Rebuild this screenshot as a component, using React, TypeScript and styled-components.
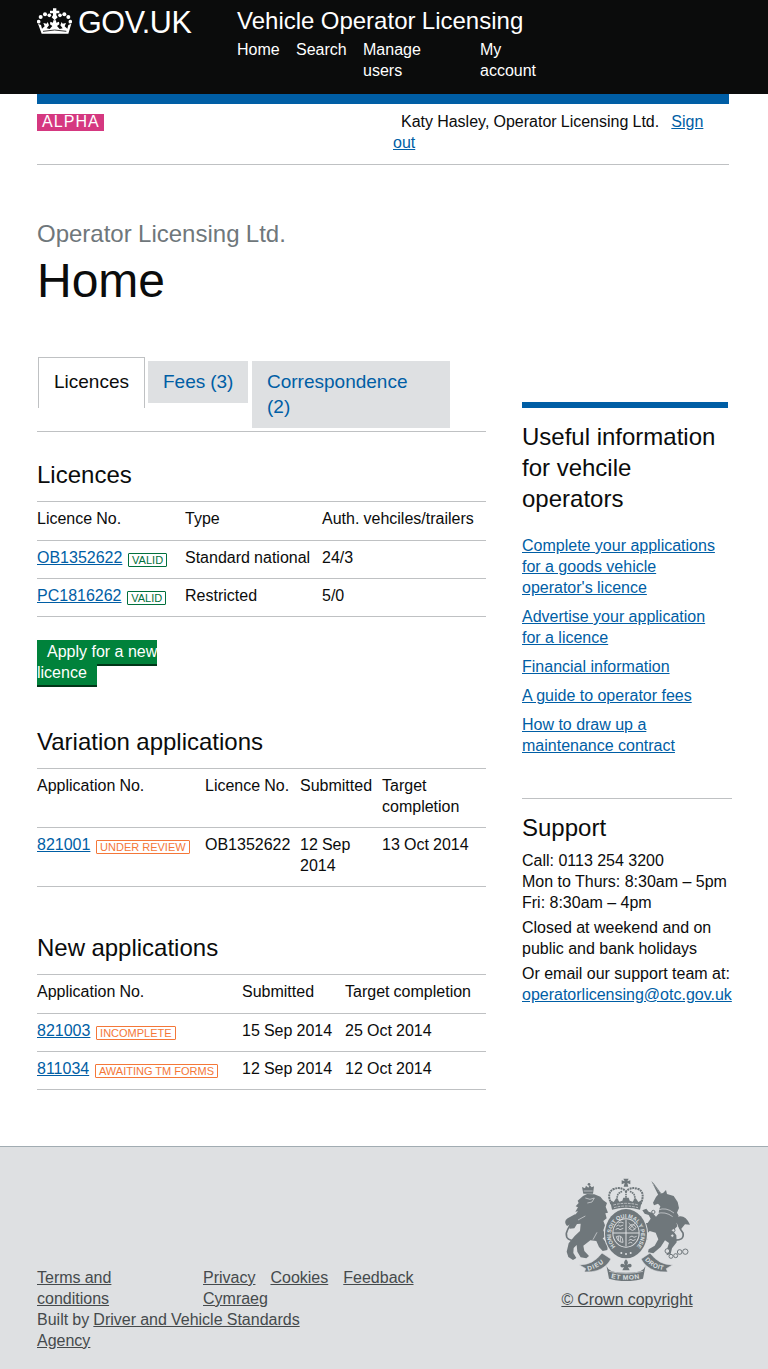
import React from "react";
import styled, { createGlobalStyle } from "styled-components";

const GlobalStyle = createGlobalStyle`
  * { box-sizing: border-box; }
  body {
    margin: 0;
    background: #fff;
    color: #0b0c0c;
    font-family: "Liberation Sans", Arial, sans-serif;
    font-size: 16px;
    line-height: 21px;
    word-spacing: -0.3px;
  }
  h1, h2, p, ul { margin: 0; padding: 0; font-weight: 400; }
  ul { list-style: none; }
`;

const Page = styled.div`
  width: 768px;
  height: 1369px;
  display: flex;
  flex-direction: column;
  overflow: hidden;
`;

const Header = styled.header`
  flex: none;
  height: 94px;
  padding: 0 39px 0 37px;
  display: flex;
  background: #0b0c0c;
  color: #fff;
`;

const Brand = styled.a`
  width: 200px;
  height: 40px;
  padding-top: 7px;
  display: flex;
  gap: 6px;
`;

const BrandName = styled.span`
  font-size: 30.5px;
  line-height: 31px;
  letter-spacing: -0.4px;
`;

const ServiceName = styled.div`
  padding-top: 6px;
  font-size: 24px;
  line-height: 30px;
`;

const Nav = styled.ul`
  padding-top: 3px;
  display: flex;
  gap: 16px;
`;

const NavItem = styled.li<{ $width?: number }>`
  width: ${(p) => (p.$width ? `${p.$width}px` : "auto")};
`;

const Strip = styled.div`
  flex: none;
  height: 71px;
  margin: 0 39px 0 37px;
  padding-top: 7px;
  border-top: 10px solid #005ea5;
  border-bottom: 1px solid #bfc1c3;
  display: flex;
  justify-content: space-between;
`;

const Phase = styled.strong`
  height: 17px;
  width: 67px;
  margin-top: 3px;
  padding-left: 5px;
  background: #d53880;
  color: #fff;
  font-weight: 400;
  line-height: 16px;
  letter-spacing: 1.05px;
  white-space: nowrap;
`;

const Account = styled.div`
  width: 336px;
  text-indent: 8px;
`;

const Link = styled.a`
  color: #005ea5;
  text-decoration: underline;
`;

const SignOut = styled(Link)`
  margin-left: 8px;
`;

const Title = styled.div`
  flex: none;
  padding: 54px 0 0 37px;
  height: 192px;
`;

const Organisation = styled.p`
  font-size: 24px;
  line-height: 30px;
  color: #6f777b;
`;

const PageHeading = styled.h1`
  font-size: 48px;
  line-height: 50px;
  margin-top: 7px;
`;

const Columns = styled.main`
  flex: none;
  height: 789px;
  padding-left: 37px;
  display: flex;
  gap: 36px;
`;

const MainColumn = styled.div`
  width: 449px;
`;

const Tabs = styled.div`
  height: 75px;
  padding-left: 1px;
  border-bottom: 1px solid #bfc1c3;
  display: flex;
  align-items: flex-start;
  font-size: 19px;
  line-height: 25px;
`;

const Tab = styled.a<{ $width: number; $gap: number }>`
  width: ${(p) => p.$width}px;
  margin: 4px 0 0 ${(p) => p.$gap}px;
  padding: 8px 14px 9px 15px;
  background: #dee0e2;
  color: #005ea5;
`;

const ActiveTab = styled.a`
  width: 107px;
  height: 51px;
  padding: 11px 15px;
  border: 1px solid #bfc1c3;
  border-bottom: 0;
`;

const SectionHeading = styled.h2<{ $space: number }>`
  margin-top: ${(p) => p.$space}px;
  font-size: 24px;
  line-height: 30px;
`;

const Table = styled.table`
  width: 449px;
  margin-top: 11px;
  table-layout: fixed;
  border-collapse: separate;
  border-spacing: 0;
  border-top: 1px solid #bfc1c3;
  text-align: left;
`;

const HeadCell = styled.th<{ $width: number; $compact?: boolean }>`
  width: ${(p) => p.$width}px;
  padding: 6px 0 ${(p) => (p.$compact ? 10 : 11)}px;
  border-bottom: 1px solid #bfc1c3;
  font-weight: 400;
  vertical-align: top;
`;

const Cell = styled.td`
  height: 38px;
  padding: 6px 0 10px;
  border-bottom: 1px solid #bfc1c3;
  vertical-align: top;
  white-space: pre-line;
`;

const Badge = styled.span<{ $color: string }>`
  display: inline-block;
  height: 14px;
  margin-left: 5.7px;
  padding: 0 3px;
  border: 1px solid ${(p) => p.$color};
  border-radius: 1px;
  color: ${(p) => p.$color};
  font-size: 11px;
  line-height: 12px;
  word-spacing: 0;
  vertical-align: -1px;
`;

const Action = styled.div`
  width: 122px;
  margin-top: 24px;
  word-spacing: 0;
`;

const Button = styled.a`
  padding: 3px 10px 4px;
  background: #00823b;
  color: #fff;
  box-shadow: 0 2px 0 #003618;
`;

const Sidebar = styled.aside`
  width: 210px;
  padding-top: 45px;
  word-spacing: -0.05px;
`;

const Related = styled.section`
  width: 206px;
  height: 396px;
  padding-top: 13px;
  border-top: 6px solid #005ea5;
`;

const SideHeading = styled.h2`
  font-size: 24px;
  line-height: 31px;
`;

const LinkList = styled.ul`
  width: 200px;
  margin-top: 21px;
  display: flex;
  flex-direction: column;
  gap: 8px;
`;

const Support = styled.section`
  padding-top: 13px;
  border-top: 1px solid #bfc1c3;
  white-space: nowrap;
`;

const Para = styled.p`
  margin-top: 4px;

  ${SideHeading} + & { margin-top: 7px; }
`;

const Footer = styled.footer`
  flex: 1;
  padding-left: 37px;
  border-top: 1px solid #a1acb2;
  background: #dee0e2;
  color: #454a4c;
  display: flex;
`;

const FooterMeta = styled.div`
  width: 524px;
  padding-top: 120px;
`;

const FooterNav = styled.div`
  display: flex;
`;

const Terms = styled.div`
  flex: none;
  width: 166px;
`;

const FooterLinks = styled.ul`
  width: 230px;
  display: flex;
  flex-wrap: wrap;
  column-gap: 15px;
`;

const FooterLink = styled.a`
  text-decoration: underline;
`;

const Crest = styled.a`
  width: 132px;
  padding-top: 31px;
  display: flex;
  flex-direction: column;
  align-items: center;
  white-space: nowrap;
`;

const CrestCaption = styled.span`
  margin-top: 8px;
  text-decoration: underline;
`;

function CrownIcon() {
  return (
    <svg width="35" height="27" viewBox="0 0 105 81" fill="#fff">
      <path d="M48 4h10v7h9v8h-9v6l4 6-9 9-9-9 4-6v-6h-9v-8h9z" />
      <circle cx="5" cy="44" r="5.5" />
      <circle cx="11" cy="30" r="6" />
      <circle cx="24" cy="22" r="6" />
      <circle cx="37" cy="25" r="5.5" />
      <circle cx="69" cy="25" r="5.5" />
      <circle cx="82" cy="22" r="6" />
      <circle cx="94" cy="30" r="6" />
      <circle cx="100" cy="44" r="5.5" />
      <path d="M3 50l9 4 3 11 8-7-4-10 10 2 3-5 4 10-7 9 9 2 8-9-7-5 1-8 8 3 1-7h8l1 7 8-3 1 8-7 5 8 9 9-2-7-9 4-10 3 5 10-2-4 10 8 7 3-11 9-4-9 30H14z" />
      <path d="M18 73q35-8 70 0" fill="none" stroke="#0b0c0c" strokeWidth="2.5" />
    </svg>
  );
}

function RoyalArms() {
  const ink = "#6f777b";
  const paper = "#dee0e2";
  return (
    <svg width="125" height="103" viewBox="30 25 375 309" fill={ink}>
      <defs>
        <path id="garter" d="M182 231A45 50 0 1 1 244 231" />
        <path id="mottoLeft" d="M99 303Q132 296 158 268" />
        <path id="mottoMid" d="M168 325Q213 335 258 325" />
        <path id="mottoRight" d="M269 271Q294 298 328 302" />
      </defs>

      {/* lion */}
      <path d="M81 52l9 4 3-8 7 6 4-8 6 7 7-3-3 22H85z" />
      <circle cx="102" cy="44" r="4" />
      <path d="M86 64h27" stroke={paper} strokeWidth="2" />
      <path d="M84 79l12-6 22 1 18 7 8 10 12 9-4 11 7 18-8 2 4 15-10 8 5 13-5 15 7 18-9 6 16 20-2 15-14 3-11-12-8-18-18-2-21 16 3 16 14 15-8 7-17-3-10-17-2-20-9 9-1 15 9 15-10 6-14-9-5-16 6-25 18-22 16-15 2-22-11 1-8 13-14 1-3-9 13-17 17-4-9-13 7-9-8 1 8-13-7-3 9-10-3-7z" />
      <path d="M64 213q-32 2-30-22 6-22 22-35" fill="none" stroke={ink} strokeWidth="5" />
      <path d="M36 169q-12-14 2-23l22-12 21 1q4 12-6 20l-21 5z" />
      <path d="M91 85l14 4 13-4-7 12-14 3M91 139l-22 12M126 188l-12 22" fill="none" stroke={paper} strokeWidth="2" />

      {/* central crown */}
      <path d="M205 27h16l-4 8 9-3v12l-9-4 3 11h-14l3-11-9 4V32l9 3z" />
      <path d="M169 103q-16-34 7-45 22-8 37 7 15-15 37-7 22 11 7 45" fill="none" stroke={ink} strokeWidth="6" strokeDasharray="6 2" />
      <path d="M213 65v32M190 98q-11-26 13-33M236 98q11-26-13-33" fill="none" stroke={ink} strokeWidth="5" strokeDasharray="5 2" />
      <path d="M165 91l11 6 8-12 9 11 9-3 3-9h16l3 9 9 3 9-11 8 12 11-6-6 29q-42-12-84 0z" />
      <path d="M175 106q38-10 76 0M177 114q36-10 72 0" fill="none" stroke={paper} strokeWidth="2" strokeDasharray="8 3" />

      {/* unicorn */}
      <path d="M289 34l8 8 23 31-9 5z" />
      <path d="M294 43l25 31" stroke={paper} strokeWidth="1.5" strokeDasharray="3 4" />
      <path d="M294 99l9-17 8-9 13-3 9-9 3 12 20 6 12 18 4 18-6 14 5 9-8 16 4 16-13 13 10 14 1 21-14 18-4 17-12 4 1-19 6-18-12-8-13 20-22 19-16-3 2-9 18-11 11-19-8-20-18-5-10 10 3 16-11 8-9-8 9-8-4-20-16-8-7-11 10-7 13 4 16 0 9-13-6-11-12-4-7-10 12-5 7 9 12 4 10 11 8-9 1-10 4-12-7-8-12 5z" />
      <path d="M309 121q24-10 48 9M305 132q26-8 48 9" fill="none" stroke={paper} strokeWidth="2" />
      <path d="M353 211q36 4 31-21-16-21-15-34" fill="none" stroke={ink} strokeWidth="5" />
      <path d="M368 164q-14-10-6-21l13-3q18-1 30 25l-15-1-14 17z" />
      <g fill={paper} stroke={ink} strokeWidth="3">
        <circle cx="295" cy="127" r="5" />
        <circle cx="355" cy="182" r="5" />
        <circle cx="352" cy="198" r="5" />
        <circle cx="337" cy="244" r="7" />
        <circle cx="348" cy="260" r="6" />
        <circle cx="362" cy="258" r="6" />
        <circle cx="374" cy="247" r="7" />
        <circle cx="391" cy="246" r="8" />
      </g>

      {/* shield and garter */}
      <ellipse cx="213" cy="192" rx="66" ry="76" fill={paper} />
      <ellipse cx="213" cy="192" rx="63" ry="74" />
      <ellipse cx="213" cy="190" rx="41" ry="44" fill={paper} />
      <ellipse cx="213" cy="190" rx="38" ry="41" />
      <path d="M213 150v80M174 190h78" stroke={paper} strokeWidth="3" />
      <g fill="none" stroke={paper} strokeWidth="2.5">
        <path d="M184 170l6-4 5 4 10-4M182 179l7-3 6 4 10-4M190 160l8-3 8 3" />
        <path d="M223 203l8-4 6 4 8-3M221 212l7-3 6 4 8-4M220 221l7-3 5 2" />
        <path d="M221 160l20 20M241 160l-20 20M221 173q12-18 22 0-10 18-22 0" />
        <path d="M184 201q19-9 20 17-16 0-20-17M190 200v14M196 201v15" />
      </g>
      <text fill={paper} fontSize="17" fontWeight="700" fontFamily="Liberation Sans, sans-serif">
        <textPath href="#garter" textLength="228" lengthAdjust="spacingAndGlyphs">HONI SOIT QUI MAL Y PENSE</textPath>
      </text>
      <circle cx="199" cy="250" r="3" fill={paper} />
      <circle cx="213" cy="253" r="3" fill={paper} />
      <circle cx="227" cy="250" r="3" fill={paper} />

      {/* motto ribbon */}
      <path d="M72 285Q112 288 141 250L168 268Q154 294 126 303 110 308 88 307L92 297z" stroke={paper} strokeWidth="2" />
      <path d="M354 285Q314 288 285 250L258 268Q272 294 300 303 316 308 338 307L334 297z" stroke={paper} strokeWidth="2" />
      <path d="M152 276Q153 302 180 307 213 312 246 307 273 302 274 276L264 327Q213 342 162 327z" />
      <path d="M162 305Q213 317 264 305" fill="none" stroke={paper} strokeWidth="2" />
      <path d="M213 269q10 9 3 17 13-9 14 2-1 8-11 4l5 10h-22l5-10q-10 4-11-4 1-11 14-2-7-8 3-17z" />
      <g fill={paper} fontWeight="700" fontFamily="Liberation Sans, sans-serif">
        <text fontSize="19"><textPath href="#mottoLeft" textLength="54" lengthAdjust="spacing">DIEU</textPath></text>
        <text fontSize="20"><textPath href="#mottoMid" textLength="86" lengthAdjust="spacing">ET MON</textPath></text>
        <text fontSize="19"><textPath href="#mottoRight" textLength="64" lengthAdjust="spacing">DROIT</textPath></text>
      </g>
    </svg>
  );
}

const GREEN = "#00703c";
const ORANGE = "#f47738";

type Ref = { id: string; status?: string; color?: string };

function Reference({ id, status, color = ORANGE }: Ref) {
  return (
    <>
      <Link>{id}</Link>
      {status && <Badge $color={color}>{status}</Badge>}
    </>
  );
}

type TableData = { columns: [string, number][]; rows: [Ref, ...string[]][]; compact?: boolean };

function DataTable({ columns, rows, compact }: TableData) {
  return (
    <Table>
      <thead>
        <tr>
          {columns.map(([label, width]) => (
            <HeadCell key={label} $width={width} $compact={compact}>{label}</HeadCell>
          ))}
        </tr>
      </thead>
      <tbody>
        {rows.map(([ref, ...values]) => (
          <tr key={ref.id}>
            <Cell><Reference {...ref} /></Cell>
            {values.map((value) => <Cell key={value}>{value}</Cell>)}
          </tr>
        ))}
      </tbody>
    </Table>
  );
}

const licences: TableData = {
  columns: [["Licence No.", 148], ["Type", 137], ["Auth. vehciles/trailers", 164]],
  rows: [
    [{ id: "OB1352622", status: "VALID", color: GREEN }, "Standard national", "24/3"],
    [{ id: "PC1816262", status: "VALID", color: GREEN }, "Restricted", "5/0"],
  ],
};

const variations: TableData = {
  compact: true,
  columns: [["Application No.", 168], ["Licence No.", 95], ["Submitted", 82], ["Target completion", 104]],
  rows: [[{ id: "821001", status: "UNDER REVIEW" }, "OB1352622", "12 Sep\n2014", "13 Oct 2014"]],
};

const applications: TableData = {
  columns: [["Application No.", 205], ["Submitted", 103], ["Target completion", 141]],
  rows: [
    [{ id: "821003", status: "INCOMPLETE" }, "15 Sep 2014", "25 Oct 2014"],
    [{ id: "811034", status: "AWAITING TM FORMS" }, "12 Sep 2014", "12 Oct 2014"],
  ],
};

const usefulLinks = [
  "Complete your applications for a goods vehicle operator's licence",
  "Advertise your application for a licence",
  "Financial information",
  "A guide to operator fees",
  "How to draw up a maintenance contract",
];

const footerLinks = ["Privacy", "Cookies", "Feedback", "Cymraeg"];

export default function App() {
  return (
    <Page>
      <GlobalStyle />
      <Header>
        <Brand>
          <CrownIcon />
          <BrandName>GOV.UK</BrandName>
        </Brand>
        <div>
          <ServiceName>Vehicle Operator Licensing</ServiceName>
          <Nav>
            <NavItem $width={43}>Home</NavItem>
            <NavItem $width={51}>Search</NavItem>
            <NavItem $width={101}>Manage<br />users</NavItem>
            <NavItem>My<br />account</NavItem>
          </Nav>
        </div>
      </Header>
      <Strip>
        <Phase>ALPHA</Phase>
        <Account>
          Katy Hasley, Operator Licensing Ltd. <SignOut>Sign<br />out</SignOut>
        </Account>
      </Strip>
      <Title>
        <Organisation>Operator Licensing Ltd.</Organisation>
        <PageHeading>Home</PageHeading>
      </Title>
      <Columns>
        <MainColumn>
          <Tabs>
            <ActiveTab>Licences</ActiveTab>
            <Tab $width={100} $gap={3}>Fees (3)</Tab>
            <Tab $width={198} $gap={4}>Correspondence<br />(2)</Tab>
          </Tabs>
          <SectionHeading $space={28}>Licences</SectionHeading>
          <DataTable {...licences} />
          <Action><Button>Apply for a new licence</Button></Action>
          <SectionHeading $space={44}>Variation applications</SectionHeading>
          <DataTable {...variations} />
          <SectionHeading $space={46}>New applications</SectionHeading>
          <DataTable {...applications} />
        </MainColumn>
        <Sidebar>
          <Related>
            <SideHeading>Useful information for vehcile operators</SideHeading>
            <LinkList>
              {usefulLinks.map((label) => <li key={label}><Link>{label}</Link></li>)}
            </LinkList>
          </Related>
          <Support>
            <SideHeading>Support</SideHeading>
            <Para>Call: 0113 254 3200<br />Mon to Thurs: 8:30am – 5pm<br />Fri: 8:30am – 4pm</Para>
            <Para>Closed at weekend and on<br />public and bank holidays</Para>
            <Para>Or email our support team at:<br /><Link>operatorlicensing@otc.gov.uk</Link></Para>
          </Support>
        </Sidebar>
      </Columns>
      <Footer>
        <FooterMeta>
          <FooterNav>
            <Terms><FooterLink>Terms and<br />conditions</FooterLink></Terms>
            <FooterLinks>
              {footerLinks.map((label) => <li key={label}><FooterLink>{label}</FooterLink></li>)}
            </FooterLinks>
          </FooterNav>
          <p>Built by <FooterLink>Driver and Vehicle Standards<br />Agency</FooterLink></p>
        </FooterMeta>
        <Crest>
          <RoyalArms />
          <CrestCaption>© Crown copyright</CrestCaption>
        </Crest>
      </Footer>
    </Page>
  );
}
